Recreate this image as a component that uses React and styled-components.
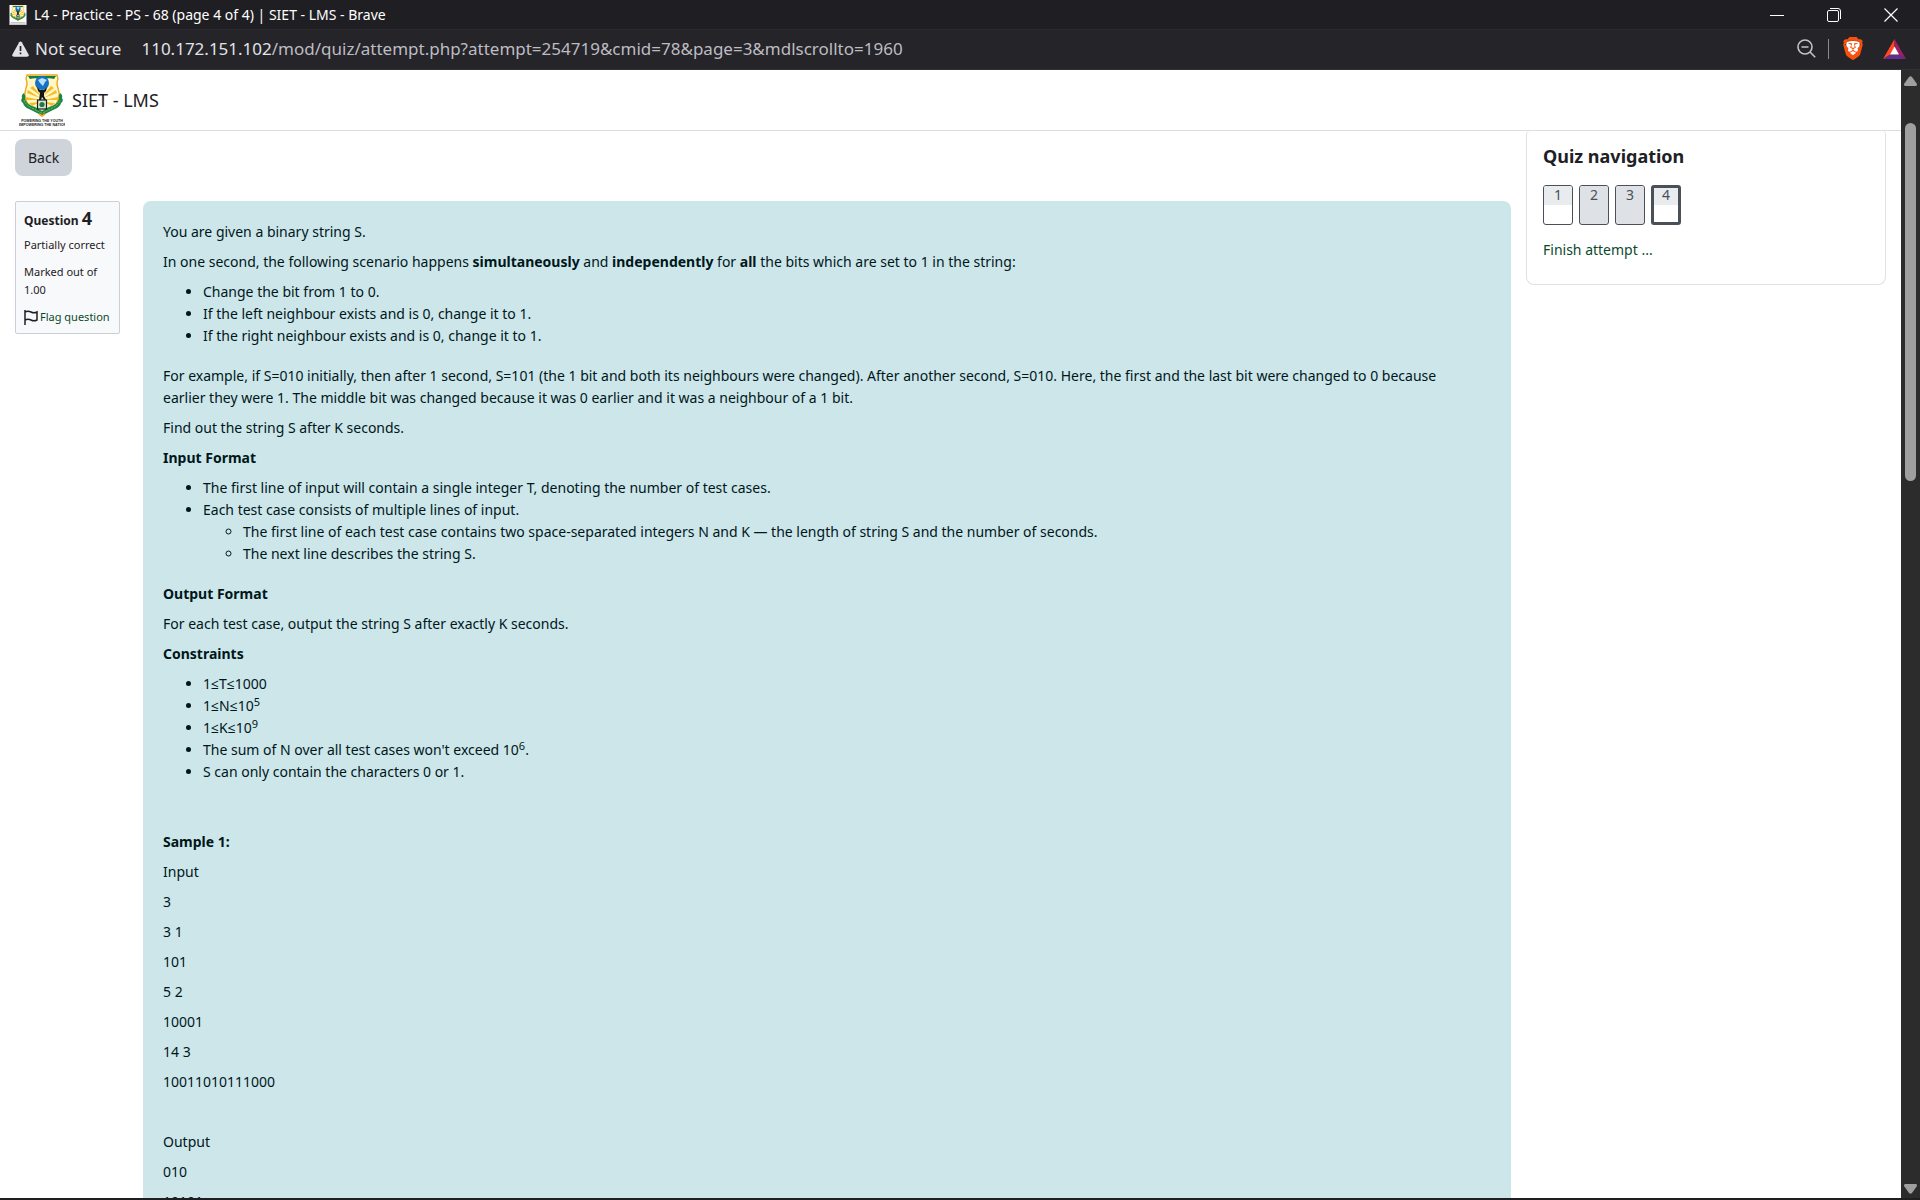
import styled, { createGlobalStyle } from "styled-components";
import { SiBrave } from "react-icons/si";

const GlobalStyle = createGlobalStyle`
  * {
    box-sizing: border-box;
  }

  body {
    margin: 0;
    background: #fff;
    color: #1d2125;
    font-family: "Noto Sans", "Open Sans", sans-serif;
    font-size: 14px;
    line-height: 22px;
  }

  button {
    font: inherit;
    color: inherit;
    border: none;
    background: none;
    padding: 0;
    cursor: pointer;
  }

  svg {
    display: block;
    flex: none;
  }
`;

const Window = styled.div`
  display: flex;
  flex-direction: column;
  height: 100vh;
  overflow: hidden;
  border-bottom: solid 2px #1f1e23;
`;

const TitleBar = styled.div`
  display: flex;
  align-items: center;
  height: 29px;
  flex: none;
  padding: 0 22px 0 8px;
  gap: 6px;
  background: #1f1e23;
  color: #fff;
  font-size: 14px;
`;

const WindowButtons = styled.div`
  display: flex;
  gap: 43px;
  margin-left: auto;
`;

const AddressBar = styled.div`
  display: flex;
  align-items: center;
  height: 41px;
  flex: none;
  padding: 0 14px 2px 12px;
  background: #252429;
  border-top: solid 1px #2b2a30;
  border-bottom: solid 1px #323137;
  color: #e3e2e8;
  font-size: 17px;
`;

const Security = styled.button`
  display: flex;
  align-items: center;
  gap: 6px;
  margin-right: 20px;
`;

const Url = styled.div`
  color: #bdbcc2;

  span {
    color: #e3e2e8;
  }
`;

const Tools = styled.div`
  display: flex;
  align-items: center;
  gap: 12px;
  margin-left: auto;
`;

const Divider = styled.span`
  width: 1px;
  height: 20px;
  background: #8a898f;
`;

const Extensions = styled.div`
  display: flex;
  align-items: center;
  gap: 20px;
  padding-left: 2px;
`;

const Viewport = styled.div`
  display: flex;
  flex: 1;
  min-height: 0;
`;

const Page = styled.div`
  display: flex;
  flex-direction: column;
  flex: 1;
  min-width: 0;
  overflow: hidden;
`;

const Navbar = styled.header`
  display: flex;
  align-items: center;
  height: 61px;
  flex: none;
  padding: 0 19px;
  border-bottom: solid 1px #dddde6;
`;

const Brand = styled.a`
  display: flex;
  align-items: center;
  gap: 7px;
  color: #1d2125;
  font-size: 18px;
  text-decoration: none;
`;

const Content = styled.div`
  display: flex;
  align-items: flex-start;
  gap: 15px;
  padding: 0 15px;
`;

const Main = styled.main`
  flex: 1;
  min-width: 0;
  padding-top: 8px;
`;

const BackButton = styled.button`
  height: 37px;
  padding: 0 13px;
  border-radius: 8px;
  background: #ced4da;
`;

const Question = styled.section`
  display: flex;
  align-items: flex-start;
  gap: 23px;
  margin-top: 25px;
`;

const Info = styled.aside`
  width: 105px;
  flex: none;
  padding: 6px 8px 7px;
  border: solid 1px #cad0d7;
  border-radius: 2px;
  background: #f8f9fa;
  font-size: 11px;
  line-height: 18px;

  p {
    margin: 0 0 9px;
  }
`;

const InfoTitle = styled.h3`
  margin: 0 0 5px;
  font-size: 12px;
  line-height: 20px;

  span {
    font-size: 18px;
  }
`;

const FlagLink = styled.a`
  display: flex;
  align-items: center;
  gap: 2px;
  color: #0a4a2b;
  text-decoration: none;
  white-space: nowrap;
`;

const Formulation = styled.div`
  flex: 1;
  min-width: 0;
  padding: 20px 40px 20px 20px;
  border-radius: 8px;
  background: #cde6ea;
  color: #00171a;

  p {
    min-height: 22px;
    margin: 0 0 8px;
  }

  ul {
    margin: 0 0 18px;
    padding-left: 40px;
  }

  ul ul {
    margin: 0;
  }

  sup {
    font-size: 11px;
    line-height: 0;
    vertical-align: 5px;
  }
`;

const NavBlock = styled.aside`
  width: 360px;
  flex: none;
  padding: 13px 16px 10px;
  border: solid 1px #dfe1e4;
  border-top: none;
  border-radius: 4px 4px 8px 8px;
`;

const NavTitle = styled.h2`
  margin: 0 0 17px;
  font-size: 18px;
  line-height: 24px;
`;

const NavButtons = styled.div`
  display: flex;
  gap: 6px;
  margin-bottom: 13px;
`;

const NavButton = styled.a`
  width: 30px;
  height: 40px;
  border: solid ${(props) => (props.$current ? "3px" : "1px")} #495057;
  border-radius: 3px;
  overflow: hidden;
  background: ${(props) => (props.$answered ? "#dee2e6" : "#fff")};
  color: #495057;
  text-align: center;
  text-decoration: none;

  span {
    display: block;
    height: ${(props) => (props.$current ? "17px" : "19px")};
    line-height: ${(props) => (props.$current ? "14px" : "18px")};
    background: ${(props) => (props.$answered ? "#dee2e6" : "#e9ecef")};
  }
`;

const FinishLink = styled.a`
  display: block;
  padding: 0 0 12px;
  line-height: 24px;
  color: #0a4a2b;
  text-decoration: none;
`;

const ScrollTrack = styled.div`
  display: flex;
  flex-direction: column;
  align-items: center;
  width: 19px;
  flex: none;
  padding: 6px 0 4px;
  background: #2c2c2c;
`;

const ScrollThumb = styled.div`
  width: 11px;
  height: 32%;
  margin: 37px 0 auto;
  border-radius: 6px;
  background: #9f9f9f;
`;

const Crest = ({ width, height, label }) => (
  <svg width={width} height={height} viewBox="0 0 46 54" aria-hidden="true">
    <rect width="46" height="54" fill="#fff" />
    <path
      d="M8 2H38L39 6Q37 10 39 15Q43 26 34 35L23 42L12 35Q3 26 7 15Q9 10 7 6Z"
      fill="#fff7c4"
      stroke="#eda91c"
      strokeWidth="1.4"
    />
    <path d="M9 3H37L35 6Q29 4 23 7Q17 4 11 6Z" fill="#128044" />
    <path
      d="M21 25L9 17L8 20ZM21 27L7 24V27ZM21 29L10 30L13 33ZM25 25L37 17L38 20ZM25 27L39 24V27ZM25 29L36 30L33 33ZM22 23L14 13L11 15ZM24 23L32 13L35 15Z"
      fill="#f9bb22"
    />
    <path
      d="M5 20Q2 22 3 25Q1 28 4 30Q5 34 10 36L22 42H24L36 36Q41 34 42 30Q45 28 43 25Q44 22 41 20Q39 23 40 26Q38 32 30 34L23 38L16 34Q8 32 6 26Q7 23 5 20Z"
      fill="#17884a"
    />
    <path
      d="M5 27Q7 33 15 36L22 40H24L31 36Q39 33 41 27"
      fill="none"
      stroke="#c4b32b"
      strokeWidth="0.8"
      strokeDasharray="2 1"
    />
    <path d="M20 41L23 43L26 41" fill="none" stroke="#eda91c" strokeWidth="1.6" />
    <circle cx="23" cy="10" r="7" fill="#1672c4" />
    <path d="M19 7L23 5L28 7L26 9L24 13L21 10Z" fill="#b9e3f8" />
    <path
      d="M18 14L21 17H25L28 14L27 18L25 20L25 23L27 27H25L23 24L22 27H20L21 20L19 18Z"
      fill="#14170f"
    />
    <rect x="18.5" y="27" width="9" height="9" fill="#d9e4d4" stroke="#17221b" strokeWidth="1.2" />
    <circle cx="23" cy="31.5" r="2.6" fill="#23784a" />
    {label && (
      <g
        fill="#1a1a1a"
        fontFamily="Liberation Sans, sans-serif"
        fontWeight="bold"
        fontSize="3.6"
        textAnchor="middle"
      >
        <text x="23" y="49">POWERING THE YOUTH</text>
        <text x="23" y="53">EMPOWERING THE NATION</text>
      </g>
    )}
    {!label && <path d="M3 48H43M1 52H45" stroke="#999" strokeWidth="2" />}
  </svg>
);

const samples = ["Input", "3", "3 1", "101", "5 2", "10001", "14 3", "10011010111000", "", "Output", "010", "10101"];

const pages = [
  { number: 1 },
  { number: 2, answered: true },
  { number: 3, answered: true },
  { number: 4, current: true },
];

const BrowserChrome = () => (
  <>
    <TitleBar>
      <Crest width={20} height={20} />
      <span>L4 - Practice - PS - 68 (page 4 of 4) | SIET - LMS - Brave</span>
      <WindowButtons>
        <button aria-label="Minimize">
          <svg width="14" height="14" fill="none" stroke="#fff">
            <path d="M0 7.5H14" />
          </svg>
        </button>
        <button aria-label="Restore">
          <svg width="14" height="14" fill="none" stroke="#fff">
            <rect x="0.5" y="2.5" width="11" height="11" rx="1.5" />
            <path d="M3 0.5H11Q13.500 0.500 13.500 3V11" />
          </svg>
        </button>
        <button aria-label="Close">
          <svg width="14" height="14" fill="none" stroke="#fff" strokeWidth="1.2">
            <path d="M0.500 0.500L13.500 13.500M13.500 0.500L0.500 13.500" />
          </svg>
        </button>
      </WindowButtons>
    </TitleBar>
    <AddressBar>
      <Security>
        <svg width="17" height="16" viewBox="0 0 17 16">
          <path
            d="M7.200 1.300Q8.500-0.500 9.800 1.300L16.600 13.500Q17.200 15.600 15 15.800H2Q-0.200 15.600 0.400 13.500Z"
            fill="#e3e2e8"
          />
          <path d="M8.500 5V10M8.500 11.500V13.300" stroke="#252429" strokeWidth="1.7" />
        </svg>
        Not secure
      </Security>
      <Url>
        <span>110.172.151.102</span>
        /mod/quiz/attempt.php?attempt=254719&amp;cmid=78&amp;page=3&amp;mdlscrollto=1960
      </Url>
      <Tools>
        <button aria-label="Zoom out">
          <svg width="19" height="19" fill="none" stroke="#c3c2c8" strokeWidth="1.6">
            <circle cx="8" cy="8" r="7" />
            <path d="M13 13L18.200 18.200M4.500 8H11.500" />
          </svg>
        </button>
        <Divider />
        <Extensions>
          <button aria-label="Brave Shields">
            <svg width="20" height="23" viewBox="2 0 20 24">
              <path d="M5 5L12 4L19 5L19 14L12 20L5 14Z" fill="#fff" />
              <SiBrave size={24} color="#fb4f0c" />
            </svg>
          </button>
          <button aria-label="Brave Rewards">
            <svg width="23" height="20" viewBox="0 0 23 20">
              <path d="M11.500 0L0 20L7.500 15.500L11.500 8Z" fill="#ff4724" />
              <path d="M11.500 0L23 20L15.500 15.500L11.500 8Z" fill="#9e1f63" />
              <path d="M0 20H23L15.500 15.500H7.500Z" fill="#662d91" />
              <path d="M11.500 7.500L7 15.500H16Z" fill="#fff" />
            </svg>
          </button>
        </Extensions>
      </Tools>
    </AddressBar>
  </>
);

const QuestionInfo = () => (
  <Info>
    <InfoTitle>
      Question <span>4</span>
    </InfoTitle>
    <p>Partially correct</p>
    <p>Marked out of 1.00</p>
    <FlagLink href="#flag">
      <svg width="14" height="15" viewBox="0 0 14 15" fill="none" stroke="#1d2125" strokeWidth="1.5">
        <path d="M1 0V15M1 2Q4 0.500 7 2T13 2V10Q10 11.500 7 10T1 10" />
      </svg>
      Flag question
    </FlagLink>
  </Info>
);

const QuestionText = () => (
  <Formulation>
    <p>You are given a binary string S.</p>
    <p>
      In one second, the following scenario happens <b>simultaneously</b> and{" "}
      <b>independently</b> for <b>all</b> the bits which are set to 1 in the
      string:
    </p>
    <ul>
      <li>Change the bit from 1 to 0.</li>
      <li>If the left neighbour exists and is 0, change it to 1.</li>
      <li>If the right neighbour exists and is 0, change it to 1.</li>
    </ul>
    <p>
      For example, if S=010 initially, then after 1 second, S=101 (the 1 bit
      and both its neighbours were changed). After another second, S=010.
      Here, the first and the last bit were changed to 0 because earlier they
      were 1. The middle bit was changed because it was 0 earlier and it was a
      neighbour of a 1 bit.
    </p>
    <p>Find out the string S after K seconds.</p>
    <p>
      <b>Input Format</b>
    </p>
    <ul>
      <li>
        The first line of input will contain a single integer T, denoting the
        number of test cases.
      </li>
      <li>
        Each test case consists of multiple lines of input.
        <ul>
          <li>
            The first line of each test case contains two space-separated
            integers N and K — the length of string S and the number of
            seconds.
          </li>
          <li>The next line describes the string S.</li>
        </ul>
      </li>
    </ul>
    <p>
      <b>Output Format</b>
    </p>
    <p>For each test case, output the string S after exactly K seconds.</p>
    <p>
      <b>Constraints</b>
    </p>
    <ul>
      <li>1≤T≤1000</li>
      <li>
        1≤N≤10<sup>5</sup>
      </li>
      <li>
        1≤K≤10<sup>9</sup>
      </li>
      <li>
        The sum of N over all test cases won't exceed 10<sup>6</sup>.
      </li>
      <li>S can only contain the characters 0 or 1.</li>
    </ul>
    <p />
    <p>
      <b>Sample 1:</b>
    </p>
    {samples.map((line, i) => (
      <p key={i}>{line}</p>
    ))}
  </Formulation>
);

const App = () => {
  return (
    <>
      <GlobalStyle />
      <Window>
        <BrowserChrome />
        <Viewport>
          <Page>
            <Navbar>
              <Brand href="#home">
                <Crest width={46} height={54} label />
                SIET - LMS
              </Brand>
            </Navbar>
            <Content>
              <Main>
                <BackButton>Back</BackButton>
                <Question>
                  <QuestionInfo />
                  <QuestionText />
                </Question>
              </Main>
              <NavBlock>
                <NavTitle>Quiz navigation</NavTitle>
                <NavButtons>
                  {pages.map((page) => (
                    <NavButton
                      key={page.number}
                      href={`#page-${page.number}`}
                      $answered={page.answered}
                      $current={page.current}
                    >
                      <span>{page.number}</span>
                    </NavButton>
                  ))}
                </NavButtons>
                <FinishLink href="#finish">Finish attempt ...</FinishLink>
              </NavBlock>
            </Content>
          </Page>
          <ScrollTrack>
            <svg width="13" height="10">
              <path d="M5 1Q6.500-0.500 8 1L13 8Q13 10 12 10H1Q0 10 0 8Z" fill="#9f9f9f" />
            </svg>
            <ScrollThumb />
            <svg width="13" height="10">
              <path d="M5 9Q6.500 10.500 8 9L13 2Q13 0 12 0H1Q0 0 0 2Z" fill="#9f9f9f" />
            </svg>
          </ScrollTrack>
        </Viewport>
      </Window>
    </>
  );
};

export default App;
